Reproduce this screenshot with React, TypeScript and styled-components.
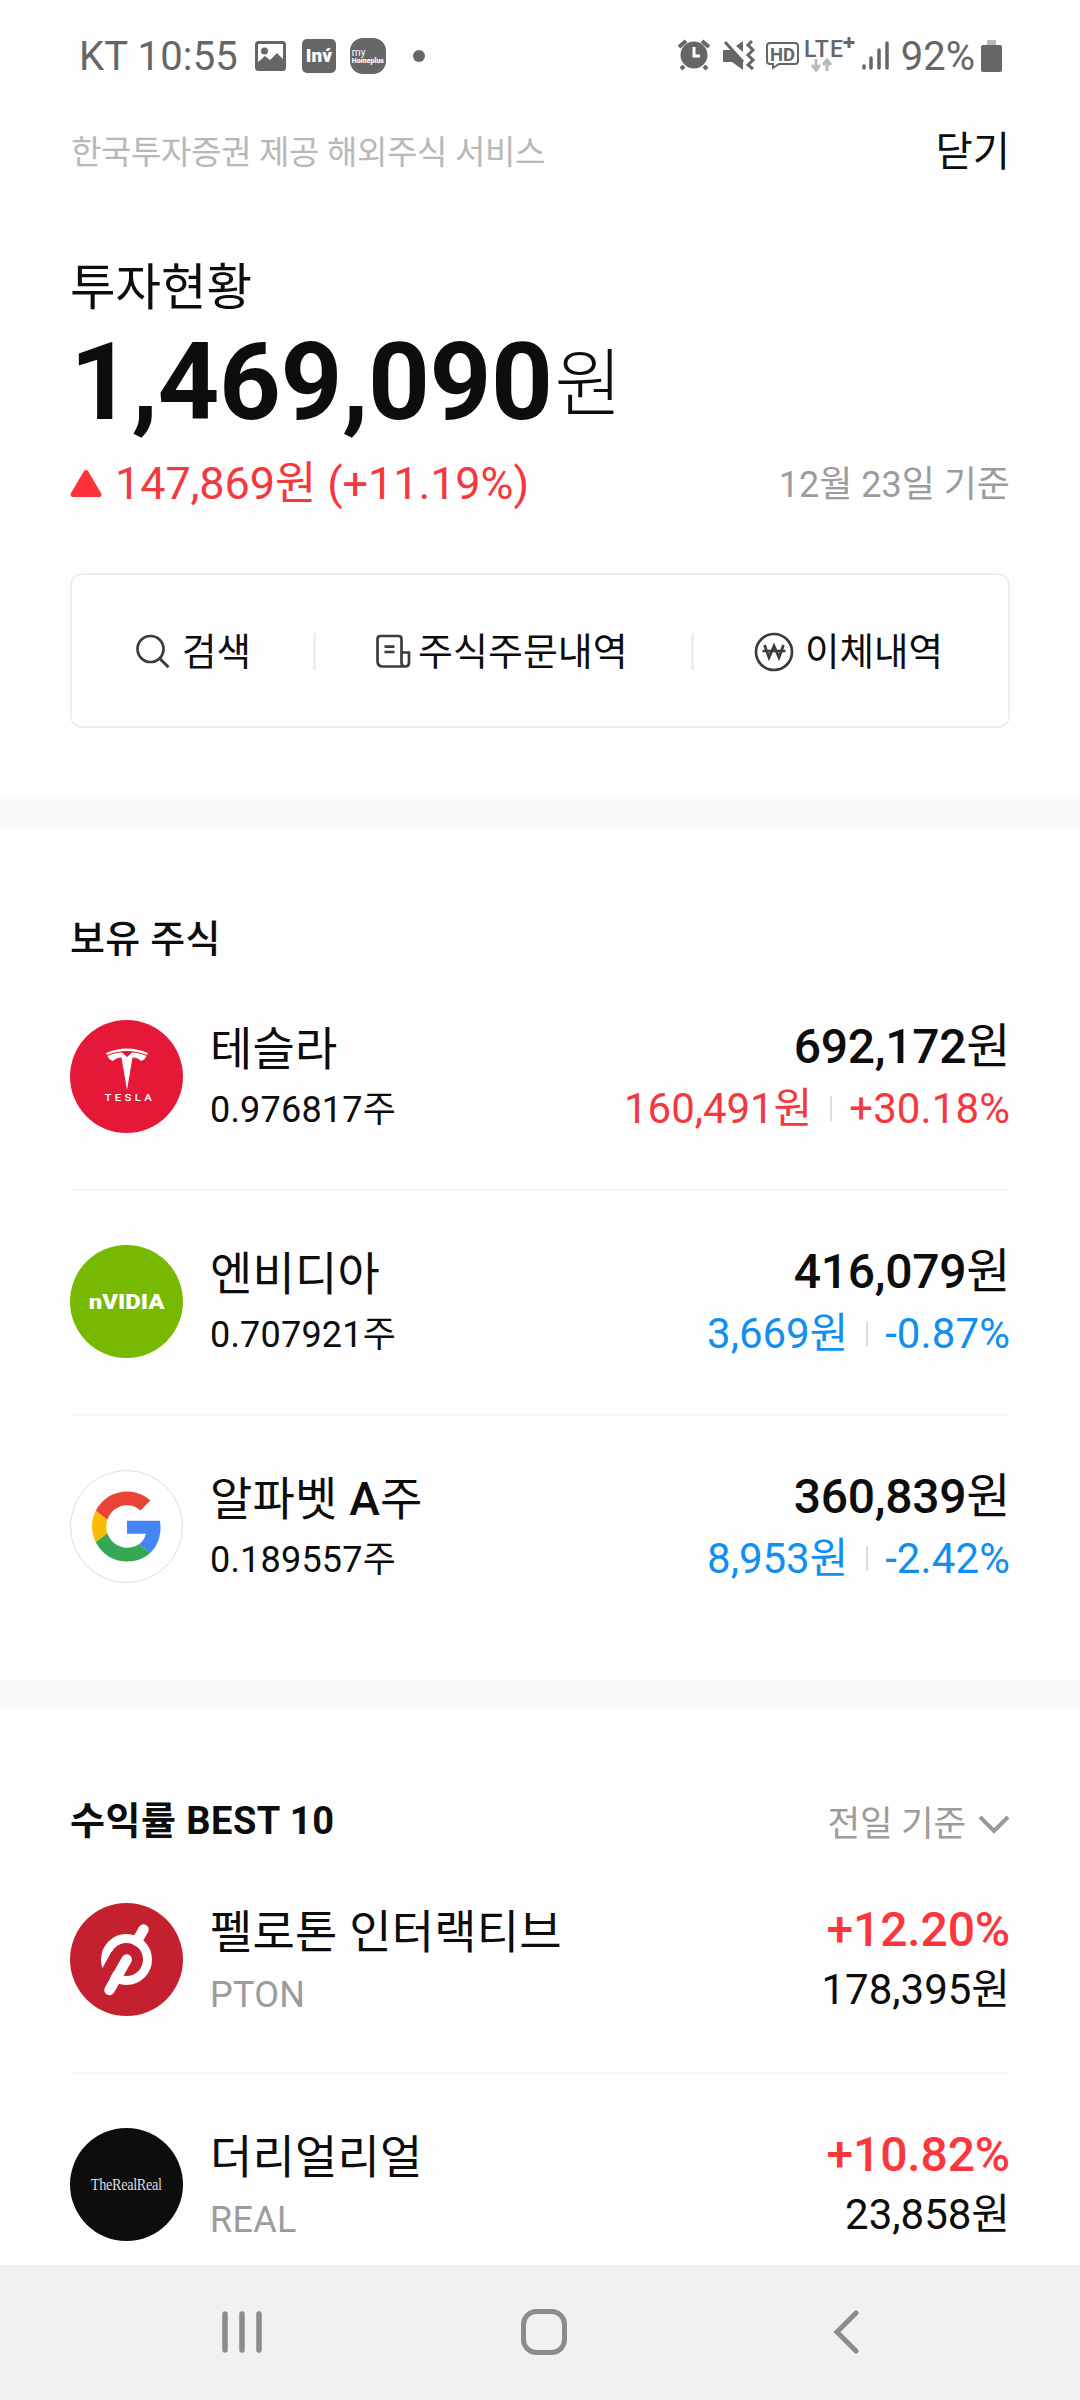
import React from "react";
import styled, { createGlobalStyle } from "styled-components";

const Global = createGlobalStyle`
  *{box-sizing:border-box}
  body{margin:0;background:#fefefe;font-family:Roboto,"Noto Sans CJK KR",sans-serif;color:#0d0d0d}
  svg{display:block;flex:none}
`;

interface TextProps {
  $size: number;
  $line: number;
  $weight?: number;
  $color?: string;
  $spacing?: number;
}
const Text = styled.span<TextProps>`
  display: block;
  white-space: pre;
  font-size: ${(p) => p.$size}px;
  line-height: ${(p) => p.$line}px;
  font-weight: ${(p) => p.$weight ?? 400};
  color: ${(p) => p.$color ?? "#0d0d0d"};
  letter-spacing: ${(p) => p.$spacing ?? 0}px;
`;
const Strong = styled.span`
  font-weight: 500;
`;

const Screen = styled.div`
  width: 1080px;
  height: 2400px;
  display: flex;
  flex-direction: column;
  overflow: hidden;
  background: #fefefe;
`;
const StatusBar = styled.header`
  height: 112px;
  flex: none;
  display: flex;
  justify-content: space-between;
  padding: 33px 78px 0 79px;
`;
const StatusGroup = styled.div`
  display: flex;
  height: 48px;
  align-items: center;
`;
const AppBadge = styled.span<{ $radius: number; $size: number; $gap: number }>`
  display: flex;
  flex-direction: column;
  justify-content: center;
  align-items: center;
  width: ${(p) => p.$size}px;
  height: ${(p) => p.$size}px;
  margin: 0 0 2px ${(p) => p.$gap}px;
  border-radius: ${(p) => p.$radius}px;
  background: #666;
`;
const BadgeLines = styled.span`
  display: flex;
  flex-direction: column;
  align-items: flex-start;
`;
const Dot = styled.span`
  width: 12px;
  height: 12px;
  margin: 0 0 3px 27px;
  border-radius: 50%;
  background: #666;
`;
const Spaced = styled.div<{ $left: number; $bottom?: number }>`
  margin-left: ${(p) => p.$left}px;
  margin-bottom: ${(p) => p.$bottom ?? 0}px;
`;
const TopBar = styled.div`
  display: flex;
  justify-content: space-between;
  align-items: center;
  height: 80px;
  padding: 0 70px 0 71px;
`;
const Provider = styled.div`
  padding-top: 2px;
`;
const Summary = styled.section`
  height: 606px;
  flex: none;
  padding: 64px 70px 0;
`;
const Amount = styled.div`
  display: flex;
  height: 130px;
  margin-top: -2px;
`;
const Won = styled.div`
  margin: 3px 0 0 2px;
`;
const DeltaRow = styled.div`
  display: flex;
  align-items: center;
  height: 60px;
  margin-top: 6px;
`;
const Grow = styled.div`
  flex: 1;
`;
const BaseDate = styled.div`
  padding-top: 2px;
`;
const QuickMenu = styled.nav`
  display: flex;
  align-items: center;
  height: 155px;
  margin-top: 59px;
  padding-top: 2px;
  border: 2px solid #eee;
  border-radius: 12px;
`;
const QuickItem = styled.div<{ $width: number; $left: number; $gap: number }>`
  display: flex;
  align-items: center;
  width: ${(p) => p.$width}px;
  padding-left: ${(p) => p.$left}px;
  gap: ${(p) => p.$gap}px;
`;
const MenuSeparator = styled.span`
  flex: none;
  width: 3px;
  height: 37px;
  background: #eee;
`;
const ValueSeparator = styled.span`
  flex: none;
  width: 2px;
  height: 25px;
  margin: 0 17px 0 18px;
  background: #ddd;
`;
const Band = styled.div`
  height: 30px;
  flex: none;
  background: #fafafa;
`;
const Section = styled.section<{ $height: number }>`
  height: ${(p) => p.$height}px;
  flex: none;
  padding: 0 70px;
  overflow: hidden;
`;
const SectionHead = styled.div`
  display: flex;
  align-items: center;
  justify-content: space-between;
  height: 61px;
  margin-top: 80px;
`;
const Sort = styled.div`
  display: flex;
  align-items: center;
  gap: 12px;
  padding-top: 6px;
`;
const Row = styled.div<{ $last?: boolean }>`
  display: flex;
  height: 225px;
  padding-top: 54px;
  border-bottom: 2px solid ${(p) => (p.$last ? "transparent" : "#f6f6f6")};
`;
const List = styled.div<{ $offset: number }>`
  margin-top: ${(p) => p.$offset}px;
`;
const Logo = styled.div<{ $bg: string; $outlined?: boolean }>`
  flex: none;
  display: flex;
  flex-direction: column;
  align-items: center;
  justify-content: center;
  width: 113px;
  height: 113px;
  border-radius: 50%;
  background: ${(p) => p.$bg};
  border: ${(p) => (p.$outlined ? "1px solid #dedede" : "none")};
`;
const Names = styled.div`
  flex: 1;
  padding-left: 27px;
`;
const Values = styled.div`
  display: flex;
  flex-direction: column;
  align-items: flex-end;
`;
const Inline = styled.div`
  display: flex;
  align-items: center;
`;
const NavBar = styled.footer`
  flex: none;
  display: flex;
  gap: 258px;
  align-items: center;
  height: 135px;
  padding: 0 0 1px 221px;
  background: #f1f1f1;
`;
const Wordmark = styled(Text)<{ $scale: number; $serif?: boolean }>`
  font-family: ${(p) => (p.$serif ? '"Liberation Serif", serif' : "Roboto, sans-serif")};
  transform: scaleX(${(p) => p.$scale});
`;

const TeslaLogo = () => (
  <Logo $bg="#e51937">
    <svg width="42" height="42" viewBox="0 0 42 42" fill="#fff">
      <path d="M0 5Q21-4 42 5L41 7Q21-1 1 7Z" />
      <path d="M1.500 8Q9 4.500 16 4.500L21 9L26 4.500Q33 4.500 40.500 8Q39 12 35 13Q32 9.500 26.500 9.500L21 42L15.500 9.500Q10 9.500 7 13Q3 12 1.500 8Z" />
    </svg>
    <Wordmark $scale={1.35} $size={8.5} $line={16} $weight={500} $color="#fff" $spacing={2.4}> TESLA</Wordmark>
  </Logo>
);
const NvidiaLogo = () => (
  <Logo $bg="#76b900">
    <Wordmark $scale={1.2} $size={20} $line={24} $weight={900} $color="#fff">nVIDIA</Wordmark>
  </Logo>
);
const GoogleLogo = () => (
  <Logo $bg="#fff" $outlined>
    <svg width="70" height="71" viewBox="0 0 48 48">
      <path fill="#ea4335" d="M24 9.500c3.540 0 6.710 1.220 9.210 3.600l6.850-6.850C35.900 2.380 30.470 0 24 0 14.620 0 6.510 5.380 2.560 13.220l7.980 6.190C12.430 13.720 17.740 9.500 24 9.500z" />
      <path fill="#4285f4" d="M46.980 24.550c0-1.570-.15-3.090-.38-4.550H24v9.020h12.940c-.58 2.960-2.260 5.480-4.780 7.180l7.730 6c4.510-4.180 7.090-10.360 7.090-17.650z" />
      <path fill="#fbbc05" d="M10.530 28.590c-.48-1.450-.76-2.990-.76-4.590s.27-3.140.76-4.590l-7.980-6.190C.92 16.460 0 20.120 0 24c0 3.880.92 7.540 2.560 10.780l7.970-6.190z" />
      <path fill="#34a853" d="M24 48c6.480 0 11.930-2.130 15.890-5.810l-7.730-6c-2.150 1.450-4.920 2.300-8.160 2.300-6.260 0-11.570-4.220-13.470-9.910l-7.980 6.190C6.510 42.620 14.620 48 24 48z" />
    </svg>
  </Logo>
);
const PelotonLogo = () => (
  <Logo $bg="#c4202f">
    <svg width="113" height="113" viewBox="0 0 113 113" fill="none" stroke="#fff">
      <circle cx="56.500" cy="56.500" r="21" strokeWidth="9" />
      <path d="M28.500 84L46.500 51.500" stroke="#c4202f" strokeWidth="11.500" />
      <path d="M39.500 87L56.700 56.500M73.500 26.500L67 38" strokeWidth="10.500" strokeLinecap="round" />
    </svg>
  </Logo>
);
const RealLogo = () => (
  <Logo $bg="#0d0d0d">
    <Wordmark $serif $scale={0.84} $size={17} $line={20} $color="#ddd" $spacing={-0.4}>TheRealReal</Wordmark>
  </Logo>
);

interface Holding {
  logo: React.ReactNode;
  name: React.ReactNode;
  id: string;
  shares: string;
  value: string;
  diff: string;
  rate: string;
  color: string;
}
const holdings: Holding[] = [
  { id: "TSLA", logo: <TeslaLogo />, name: "테슬라", shares: "0.976817주", value: "692,172", diff: "160,491원", rate: "+30.18%", color: "#f4383e" },
  { id: "NVDA", logo: <NvidiaLogo />, name: "엔비디아", shares: "0.707921주", value: "416,079", diff: "3,669원", rate: "-0.87%", color: "#118ff0" },
  { id: "GOOGL", logo: <GoogleLogo />, name: <>알파벳 <Strong>A</Strong>주</>, shares: "0.189557주", value: "360,839", diff: "8,953원", rate: "-2.42%", color: "#118ff0" },
];
const best = [
  { logo: <PelotonLogo />, name: "펠로톤 인터랙티브", ticker: "PTON", rate: "+12.20%", price: "178,395원" },
  { logo: <RealLogo />, name: "더리얼리얼", ticker: "REAL", rate: "+10.82%", price: "23,858원" },
];

export default function App() {
  return (
    <Screen>
      <Global />
      <StatusBar>
        <StatusGroup>
          <Text $size={40} $line={48} $color="#666" $spacing={0.15}>KT 10:55</Text>
          <Spaced $left={17} $bottom={2}>
            <svg width="31" height="30" viewBox="0 0 31 30">
              <rect x="1.500" y="1.500" width="28" height="27" rx="2" fill="none" stroke="#666" strokeWidth="3" />
              <circle cx="9.500" cy="10" r="3.500" fill="#666" />
              <path d="M3 21L10 15L15 19L22 12L28 18V27H3Z" fill="#666" />
            </svg>
          </Spaced>
          <AppBadge $radius={5} $size={34} $gap={16}>
            <Text $size={19} $line={20} $weight={900} $color="#fff">Inv́</Text>
          </AppBadge>
          <AppBadge $radius={13} $size={36} $gap={14}>
            <BadgeLines>
              <Text $size={10} $line={9} $color="#fff">my</Text>
              <Text $size={7} $line={8} $weight={900} $color="#fff">Homeplus</Text>
            </BadgeLines>
          </AppBadge>
          <Dot />
        </StatusGroup>
        <StatusGroup>
          <svg width="238" height="48" viewBox="0 0 238 48">
            <g fill="none" stroke="#666" strokeWidth="4">
              <path d="M2 14L9 8M32 14L25 8M7 33L4 36M27 33L30 36" />
              <circle cx="17" cy="22" r="13.500" fill="#666" stroke="none" />
              <path d="M17 14V23H23" stroke="#fefefe" strokeWidth="3" />
              <path d="M48 9L66 29" strokeWidth="3" />
              <path d="M46 17H54L66 28V37L55 29H46ZM59 13L66 8V19Z" fill="#666" stroke="none" />
              <path d="M75 8L71 12L76 17L71 22L76 27L71 32L76 36" strokeWidth="3" />
              <path d="M93 10H118Q121 10 121 13V28Q121 31 118 31H102L96 35V31H93Q90 31 90 28V13Q90 10 93 10Z" strokeWidth="2" />
            </g>
            <text x="93" y="27.500" fontFamily="Roboto" fontWeight="700" fontSize="19" textLength="25" lengthAdjust="spacingAndGlyphs" fill="#666">HD</text>
            <text x="127" y="24" fontFamily="Roboto" fontWeight="500" fontSize="23" textLength="39" fill="#666">LTE</text>
            <path d="M172 4V15M166.500 9.500H177.500" stroke="#666" strokeWidth="3" />
            <path d="M139 26V36M135 32L139 37L143 32M150 38V28M146 32L150 27L154 32" stroke="#bbb" strokeWidth="3" fill="none" />
            <path d="M187 33V35M194 25V35M202 17V35M210 10V35" stroke="#666" strokeWidth="3.500" strokeLinecap="round" />
          </svg>
          <Spaced $left={-14}>
            <Text $size={40} $line={48} $color="#666">92%</Text>
          </Spaced>
          <Spaced $left={6} $bottom={2}>
            <svg width="21" height="32" viewBox="0 0 21 32">
              <rect x="6" y="0" width="9" height="5" fill="#bbb" />
              <rect x="0" y="5" width="21" height="27" rx="2" fill="#666" />
            </svg>
          </Spaced>
        </StatusGroup>
      </StatusBar>
      <TopBar>
        <Provider>
          <Text $size={33} $line={50} $color="#b8b8b8" $spacing={-0.33}>한국투자증권 제공 해외주식 서비스</Text>
        </Provider>
        <Text $size={40.5} $line={50}>닫기</Text>
      </TopBar>
      <Summary>
        <Text $size={49.5} $line={64}>투자현황</Text>
        <Amount>
          <Text $size={108} $line={128} $weight={700} $spacing={-0.5}>1,469,090</Text>
          <Won>
            <Text $size={74} $line={128} $weight={300}>원</Text>
          </Won>
        </Amount>
        <DeltaRow>
          <svg width="32" height="28" viewBox="0 0 32 28">
            <path d="M16 2.500L29 24.500H3Z" fill="#fd3339" stroke="#fd3339" strokeWidth="5" strokeLinejoin="round" />
          </svg>
          <Spaced $left={13}>
            <Text $size={45} $line={60} $color="#f4383e" $spacing={-0.1}>147,869원 (+11.19%)</Text>
          </Spaced>
          <Grow />
          <BaseDate>
            <Text $size={36} $line={60} $color="#9c9c9c">12월 23일 기준</Text>
          </BaseDate>
        </DeltaRow>
        <QuickMenu>
          <QuickItem $width={241} $left={64} $gap={11}>
            <svg width="35" height="35" viewBox="0 0 35 35" fill="none" stroke="#3c3c3c" strokeWidth="2.700">
              <circle cx="14.500" cy="15" r="13" />
              <path d="M23.700 24.500L32.500 33.300" strokeWidth="3" />
            </svg>
            <Text $size={37.5} $line={56}>검색</Text>
          </QuickItem>
          <MenuSeparator />
          <QuickItem $width={375} $left={60} $gap={7}>
            <svg width="35" height="35" viewBox="0 0 35 35" fill="none" stroke="#3c3c3c" strokeWidth="2.700">
              <path d="M25.500 18.500V5Q25.500 2 22.500 2H4.500Q1.500 2 1.500 5V27Q1.500 32.500 7 32.500H29Q33 32.500 33 28.500V18.500H25.500V28.500Q25.500 32.500 29 32.500M8.500 12.700H18.500M8.500 18H18.500" />
            </svg>
            <Text $size={38} $line={56}>주식주문내역</Text>
          </QuickItem>
          <MenuSeparator />
          <QuickItem $width={310} $left={60} $gap={11}>
            <svg width="40" height="40" viewBox="0 0 40 40" fill="none" stroke="#3c3c3c" strokeWidth="2.700">
              <circle cx="20" cy="20" r="18" />
              <path d="M10.500 13L15 25.500L20 14L25 25.500L29.500 13M8.500 19H31.500" />
            </svg>
            <Text $size={37.5} $line={56}>이체내역</Text>
          </QuickItem>
        </QuickMenu>
      </Summary>
      <Band />
      <Section $height={852}>
        <SectionHead>
          <Text $size={38} $line={56} $weight={500} $spacing={0.3}>보유 주식</Text>
        </SectionHead>
        <List $offset={-3}>
          {holdings.map((h, i) => (
            <Row key={h.id} $last={i === holdings.length - 1}>
              {h.logo}
              <Names>
                <Text $size={46} $line={59} $spacing={0.2}>{h.name}</Text>
                <Text $size={36} $line={62} $spacing={0.2}>{h.shares}</Text>
              </Names>
              <Values>
                <Text $size={48} $line={53} $spacing={-0.3}><Strong>{h.value}</Strong>원</Text>
                <Inline>
                  <Text $size={42} $line={71} $color={h.color} $spacing={-0.05}>{h.diff}</Text>
                  <ValueSeparator />
                  <Text $size={42} $line={71} $color={h.color} $spacing={0.1}>{h.rate}</Text>
                </Inline>
              </Values>
            </Row>
          ))}
        </List>
      </Section>
      <Band />
      <Section $height={555}>
        <SectionHead>
          <Text $size={38} $line={58} $weight={700} $spacing={0.5}>수익률 BEST 10</Text>
          <Sort>
            <Text $size={35.5} $line={56} $color="#9c9c9c" $spacing={-0.2}>전일 기준</Text>
            <svg width="32" height="20" viewBox="0 0 32 20" fill="none" stroke="#999" strokeWidth="4">
              <path d="M2 3L16 17L30 3" />
            </svg>
          </Sort>
        </SectionHead>
        <List $offset={-2}>
          {best.map((b) => (
            <Row key={b.ticker}>
              {b.logo}
              <Names>
                <Text $size={46} $line={58} $spacing={0.2}>{b.name}</Text>
                <Text $size={36} $line={69} $color="#9c9c9c" $spacing={0.3}>{b.ticker}</Text>
              </Names>
              <Values>
                <Text $size={48} $line={53} $weight={500} $color="#fa373d" $spacing={-0.15}>{b.rate}</Text>
                <Text $size={42} $line={67}>{b.price}</Text>
              </Values>
            </Row>
          ))}
        </List>
      </Section>
      <NavBar>
        <svg width="42" height="44" viewBox="0 0 42 44" stroke="#8c8c8c" strokeWidth="5.500" strokeLinecap="round">
          <path d="M4 4V40M21 4V40M38 4V40" />
        </svg>
        <svg width="46" height="46" viewBox="0 0 46 46">
          <rect x="2.500" y="2.500" width="41" height="41" rx="13" fill="none" stroke="#8c8c8c" strokeWidth="5" />
        </svg>
        <svg width="35" height="44" viewBox="-8 0 35 44" fill="none" stroke="#8c8c8c" strokeWidth="5" strokeLinecap="round">
          <path d="M23 3L4 22L23 41" />
        </svg>
      </NavBar>
    </Screen>
  );
}
